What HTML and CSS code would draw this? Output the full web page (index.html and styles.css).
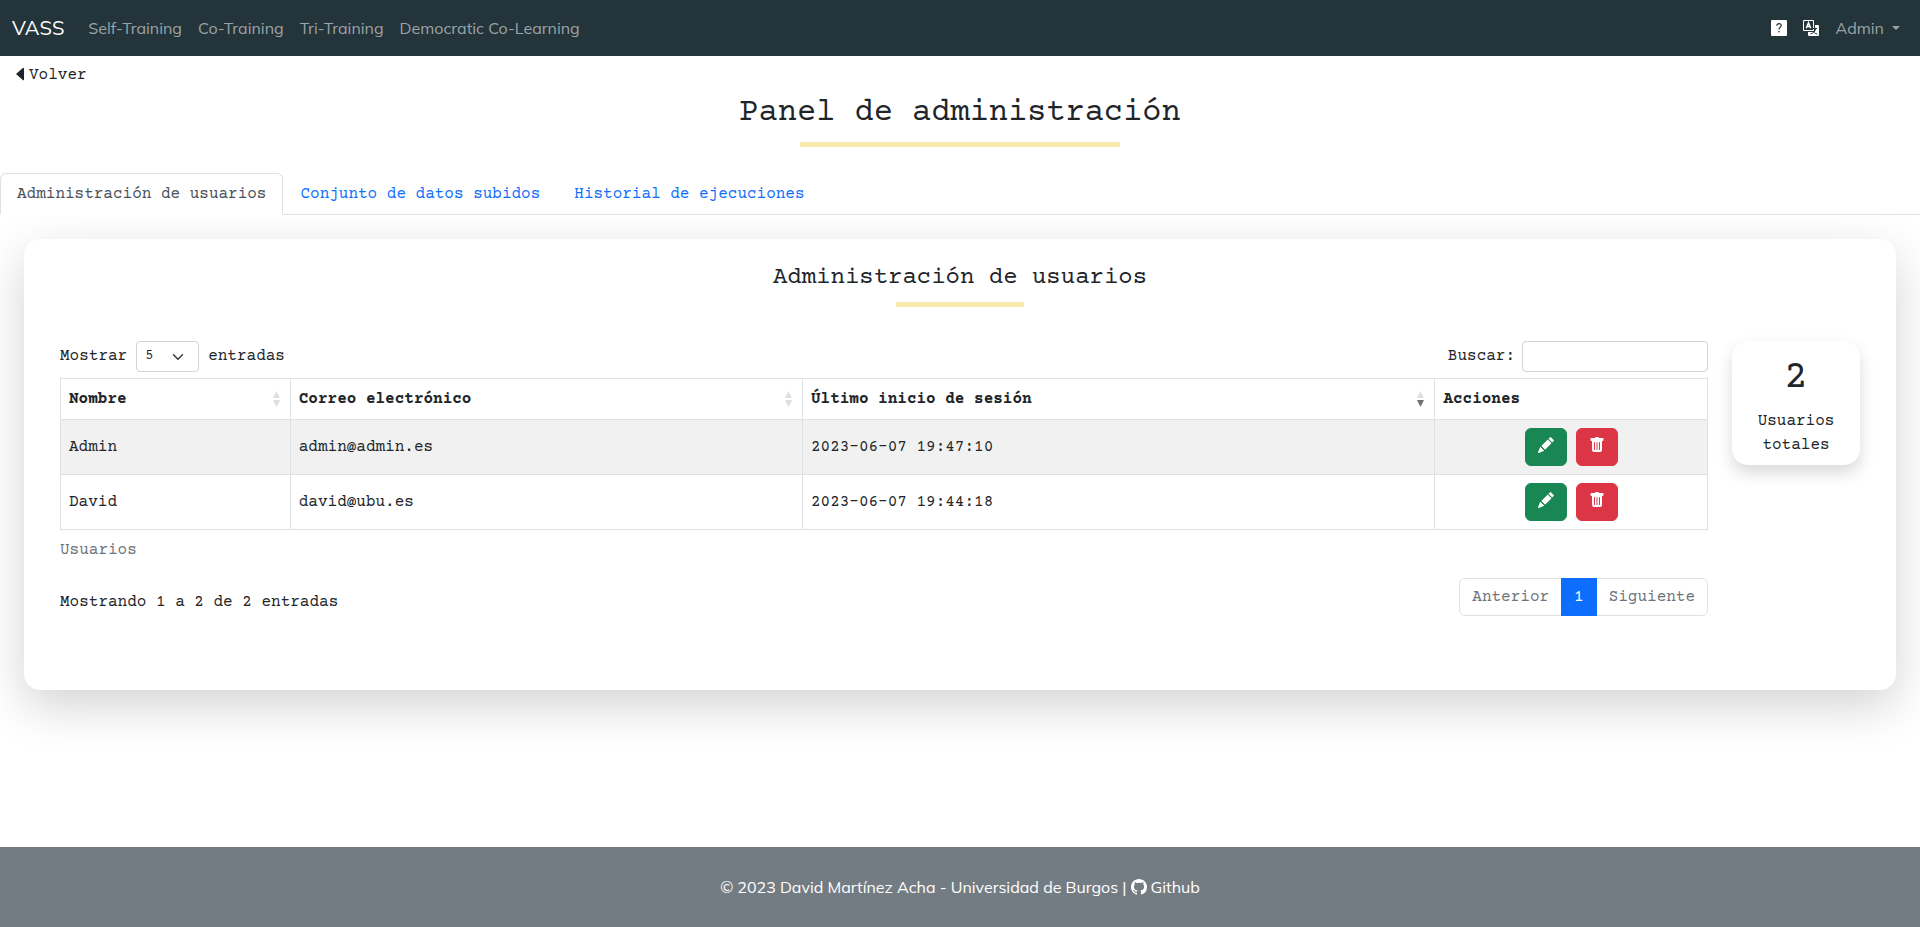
FILE: index.html
```html
<!DOCTYPE html>
<html lang="es">
<head>
<meta charset="utf-8">
<meta name="viewport" content="width=device-width, initial-scale=1">
<title>Panel de administración</title>
<link rel="stylesheet" href="styles.css">
</head>
<body>
<svg class="sprite" aria-hidden="true">
  <symbol id="pencil" viewBox="0 0 16 16"><path d="M12.854.146a.5.5 0 0 0-.707 0L10.5 1.793 14.207 5.5l1.647-1.646a.5.5 0 0 0 0-.708zm.646 6.061L9.793 2.5 3.293 9H3.5a.5.5 0 0 1 .5.5v.5h.5a.5.5 0 0 1 .5.5v.5h.5a.5.5 0 0 1 .5.5v.5h.5a.5.5 0 0 1 .5.5v.207zm-7.468 7.468A.5.5 0 0 1 6 13.5V13h-.5a.5.5 0 0 1-.5-.5V12h-.5a.5.5 0 0 1-.5-.5V11h-.5a.5.5 0 0 1-.5-.5V10h-.5a.5.5 0 0 1-.175-.032l-.179.178a.5.5 0 0 0-.11.168l-2 5a.5.5 0 0 0 .65.65l5-2a.5.5 0 0 0 .168-.11z"/></symbol>
  <symbol id="trash" viewBox="0 0 16 16"><path d="M2.5 1a1 1 0 0 0-1 1v1a1 1 0 0 0 1 1H3v9a2 2 0 0 0 2 2h6a2 2 0 0 0 2-2V4h.5a1 1 0 0 0 1-1V2a1 1 0 0 0-1-1H10a1 1 0 0 0-1-1H7a1 1 0 0 0-1 1H2.5zm3 4a.5.5 0 0 1 .5.5v7a.5.5 0 0 1-1 0v-7a.5.5 0 0 1 .5-.5zM8 5a.5.5 0 0 1 .5.5v7a.5.5 0 0 1-1 0v-7A.5.5 0 0 1 8 5zm3 .5v7a.5.5 0 0 1-1 0v-7a.5.5 0 0 1 1 0z"/></symbol>
</svg>

<nav class="navbar">
  <a class="brand" href="#">VASS</a>
  <a class="nav-link" href="#">Self-Training</a>
  <a class="nav-link" href="#">Co-Training</a>
  <a class="nav-link" href="#">Tri-Training</a>
  <a class="nav-link" href="#">Democratic Co-Learning</a>
  <div class="nav-end">
    <a class="nav-icon" href="#" aria-label="Ayuda">
      <svg class="icon" viewBox="0 0 16 16"><rect width="16" height="16" rx="1"/><path class="cut" d="M5.8 5.700C5.900 4.200 6.800 3.600 8 3.600c1.300 0 2.200.7 2.200 1.900 0 1.800-2.200 1.800-2.200 3.900"/><circle class="dot" cx="8" cy="11.800" r=".8"/></svg>
    </a>
    <a class="nav-icon" href="#" aria-label="Idioma">
      <svg class="icon" viewBox="0 0 16 16"><path d="M12 5h3a1 1 0 0 1 1 1v9a1 1 0 0 1-1 1H6a1 1 0 0 1-1-1v-3h6a1 1 0 0 0 1-1z"/><path fill-rule="evenodd" d="M1 0h9a1 1 0 0 1 1 1v9a1 1 0 0 1-1 1H1a1 1 0 0 1-1-1V1a1 1 0 0 1 1-1zm.5 1a.5.5 0 0 0-.5.5v8a.5.5 0 0 0 .5.5h8a.5.5 0 0 0 .5-.5v-8a.5.5 0 0 0-.5-.5z"/><path class="mark" d="M3.300 8.200 5.500 2.800 7.700 8.200M4.200 6.400h2.600"/><path class="cut thin" d="M9.500 8.500h4.500M13 8.500c-.8 2.500-2.500 4.500-5.500 5.500M9.800 11c.9 1.500 2.200 2.500 4.500 3"/></svg>
    </a>
    <button class="nav-link user" type="button">Admin<span class="caret"></span></button>
  </div>
</nav>

<main class="main">
  <a class="back" href="#"><svg class="back-icon" viewBox="0 0 8 14"><path d="M0 6 6.500.3A.8.8 0 0 1 8 .9v10.200a.8.8 0 0 1-1.500.6z"/></svg>Volver</a>
  <h1 class="title">Panel de administración</h1>
  <div class="rule"></div>

  <div class="tabs" role="tablist">
    <button class="tab active" role="tab" type="button">Administración de usuarios</button>
    <button class="tab" role="tab" type="button">Conjunto de datos subidos</button>
    <button class="tab" role="tab" type="button">Historial de ejecuciones</button>
  </div>

  <section class="card">
    <h2 class="subtitle">Administración de usuarios</h2>
    <div class="rule short"></div>
    <div class="content">
      <div class="listing">
        <div class="bar">
          <label class="field">Mostrar <select class="select"><option>5</option><option>10</option></select> entradas</label>
          <label class="field search">Buscar: <input class="input" type="search"></label>
        </div>
        <table class="table">
          <caption>Usuarios</caption>
          <colgroup><col class="c-name"><col class="c-mail"><col class="c-date"><col></colgroup>
          <thead>
            <tr>
              <th><div class="head">Nombre<svg class="sort" viewBox="0 0 7 16"><path d="M3.500 0 7 7H0z"/><path class="down" d="M0 9h7l-3.500 7z"/></svg></div></th>
              <th><div class="head">Correo electrónico<svg class="sort" viewBox="0 0 7 16"><path d="M3.500 0 7 7H0z"/><path class="down" d="M0 9h7l-3.500 7z"/></svg></div></th>
              <th><div class="head">Último inicio de sesión<svg class="sort desc" viewBox="0 0 7 16"><path d="M3.500 0 7 7H0z"/><path class="down" d="M0 9h7l-3.500 7z"/></svg></div></th>
              <th>Acciones</th>
            </tr>
          </thead>
          <tbody>
            <tr>
              <td>Admin</td><td>admin@admin.es</td><td>2023-06-07 19:47:10</td>
              <td><div class="actions"><button class="btn edit" type="button" aria-label="Editar"><svg class="icon"><use href="#pencil"/></svg></button><button class="btn delete" type="button" aria-label="Eliminar"><svg class="icon"><use href="#trash"/></svg></button></div></td>
            </tr>
            <tr>
              <td>David</td><td>david@ubu.es</td><td>2023-06-07 19:44:18</td>
              <td><div class="actions"><button class="btn edit" type="button" aria-label="Editar"><svg class="icon"><use href="#pencil"/></svg></button><button class="btn delete" type="button" aria-label="Eliminar"><svg class="icon"><use href="#trash"/></svg></button></div></td>
            </tr>
          </tbody>
        </table>
        <div class="bar bottom">
          <p class="info">Mostrando 1 a 2 de 2 entradas</p>
          <div class="pages">
            <button class="page" type="button">Anterior</button><button class="page current" type="button">1</button><button class="page" type="button">Siguiente</button>
          </div>
        </div>
      </div>
      <aside class="stat"><div class="number">2</div><div>Usuarios totales</div></aside>
    </div>
  </section>
</main>

<footer class="footer">
  <span>© 2023 David Martínez Acha - Universidad de Burgos |</span>
  <a class="github" href="#"><svg class="icon" viewBox="0 0 16 16"><path d="M8 0C3.580 0 0 3.580 0 8c0 3.540 2.290 6.530 5.470 7.590.4.070.55-.17.55-.38 0-.19-.01-.82-.01-1.490-2.010.37-2.530-.49-2.690-.94-.09-.23-.48-.94-.82-1.130-.28-.15-.68-.52-.01-.53.63-.01 1.080.58 1.230.82.72 1.210 1.870.87 2.330.66.070-.52.28-.87.51-1.070-1.780-.2-3.640-.89-3.640-3.950 0-.87.31-1.590.82-2.150-.08-.2-.36-1.020.08-2.120 0 0 .67-.21 2.200.82.64-.18 1.320-.27 2-.27s1.360.09 2 .27c1.530-1.040 2.200-.82 2.200-.82.44 1.100.16 1.920.08 2.120.51.56.82 1.270.82 2.150 0 3.070-1.870 3.750-3.650 3.950.29.25.54.73.54 1.480 0 1.070-.01 1.930-.01 2.200 0 .21.15.46.55.38A8.010 8.010 0 0 0 16 8c0-4.420-3.580-8-8-8z"/></svg>Github</a>
</footer>
</body>
</html>
```
FILE: styles.css
```css
*, *::before, *::after { box-sizing: border-box; }

body {
  margin: 0;
  min-height: 100vh;
  display: flex;
  flex-direction: column;
  font: 16px/24px "Courier Prime", "Liberation Mono", monospace;
  color: #212529;
  background: #fff;
}

a { color: inherit; text-decoration: none; }
button, input, select { font: inherit; color: inherit; }
button { cursor: pointer; }
h1, h2, p { margin: 0; font-weight: 400; }

.sprite { display: none; }
.icon { width: 16px; height: 16px; fill: currentColor; display: block; }

.navbar {
  display: flex;
  align-items: center;
  height: 56px;
  padding: 0 12px;
  background: #24343b;
  color: #fff;
  font-family: Mulish, Lato, sans-serif;
}
.brand { font-size: 20px; margin-right: 16px; }
.nav-link { padding: 8px; color: #9ca3a6; }
.nav-end { display: flex; align-items: center; margin-left: auto; }
.nav-icon { padding: 8px; }
.cut { fill: none; stroke: #24343b; stroke-width: 1.2; }
.thin { stroke-width: 1; }
.mark { fill: none; stroke: currentColor; stroke-width: 1.5; }
.dot { fill: #24343b; }
.user { display: flex; align-items: center; gap: 8px; border: 0; background: none; }
.caret { border: 4px solid transparent; border-top-color: currentColor; border-bottom: 0; }

.main { flex: 1; }
.back { display: flex; width: max-content; align-items: center; gap: 5px; margin: 7px 16px 0; }
.back-icon { width: 8px; height: 14px; fill: currentColor; }
.title { margin-top: 7px; font-size: 32px; line-height: 38px; text-align: center; }
.rule { width: 320px; height: 5px; margin: 10px auto 0; background: #fbeaad; }
.rule.short { width: 128px; }

.tabs { display: flex; margin-top: 26px; border-bottom: 1px solid #dee2e6; }
.tab {
  margin-bottom: -1px;
  padding: 8px 16px;
  border: 1px solid transparent;
  border-radius: 6px 6px 0 0;
  background: none;
  color: #0d6efd;
}
.tab.active { color: #495057; background: #fff; border-color: #dee2e6 #dee2e6 #fff; }

.card {
  margin: 24px;
  padding: 25px 36px 74px;
  border-radius: 16px;
  background: #fff;
  box-shadow: 0 16px 48px rgba(0, 0, 0, .175);
}
.subtitle { font-size: 24px; line-height: 28px; text-align: center; }
.content { display: flex; align-items: flex-start; gap: 24px; margin-top: 34px; }
.listing { flex: 1; }
.bar { display: flex; justify-content: space-between; }
.field { display: flex; align-items: center; gap: 9px; line-height: 21px; }
.field.search { gap: 7px; }
.select {
  width: 63px;
  height: 31px;
  padding: 4px 8px;
  border: 1px solid #ced4da;
  border-radius: 4px;
  appearance: none;
  font-size: 14px;
  background: #fff url("data:image/svg+xml,%3csvg xmlns='http://www.w3.org/2000/svg' viewBox='0 0 16 16'%3e%3cpath fill='none' stroke='%23343a40' stroke-linecap='round' stroke-linejoin='round' stroke-width='2' d='m2 5 6 6 6-6'/%3e%3c/svg%3e") no-repeat right 14px center / 12px 12px;
}
.input {
  width: 186px;
  height: 31px;
  padding: 4px 8px;
  border: 1px solid #ced4da;
  border-radius: 4px;
  background: #fff;
  font-size: 14px;
}

.table { width: 100%; margin-top: 6px; border-collapse: collapse; table-layout: fixed; }
.c-name { width: 13.95%; }
.c-mail { width: 31.1%; }
.c-date { width: 38.4%; }
.table caption { caption-side: bottom; padding: 8px 0; text-align: left; color: #6c757d; }
.table th, .table td { padding: 8px; border: 1px solid #dee2e6; text-align: left; }
.table tbody tr:nth-child(odd) { background: #f1f1f1; }
.head { display: flex; align-items: center; justify-content: space-between; }
.sort { width: 7px; height: 16px; margin-right: 2px; fill: #dfdfe0; }
.desc .down { fill: #6f7173; }
.actions { display: flex; justify-content: center; gap: 9px; }
.btn { height: 38px; padding: 0 12px 4px; border: 1px solid; border-radius: 6px; color: #fff; }
.edit { background: #198754; border-color: #198754; }
.delete { background: #dc3545; border-color: #dc3545; }

.bottom { margin-top: 8px; }
.info { padding-top: 12px; }
.pages { display: flex; }
.page { padding: 6px 12px; border: 1px solid #dee2e6; background: #fff; color: #6c757d; }
.page + .page { margin-left: -1px; }
.page:first-child { border-radius: 6px 0 0 6px; }
.page:last-child { border-radius: 0 6px 6px 0; }
.page.current { position: relative; border-color: #0d6efd; background: #0d6efd; color: #fff; }

.stat {
  width: 128px;
  padding: 14px 16px 8px;
  border-radius: 16px;
  background: #fff;
  box-shadow: 0 8px 16px rgba(0, 0, 0, .15);
  text-align: center;
}
.number { margin-bottom: 6px; font-size: 40px; line-height: 48px; }

.footer {
  display: flex;
  justify-content: center;
  gap: 4px;
  padding: 28px 16px;
  background: #747c83;
  color: #fff;
  font-family: Mulish, Lato, sans-serif;
}
.github { display: flex; align-items: center; gap: 4px; }
```
